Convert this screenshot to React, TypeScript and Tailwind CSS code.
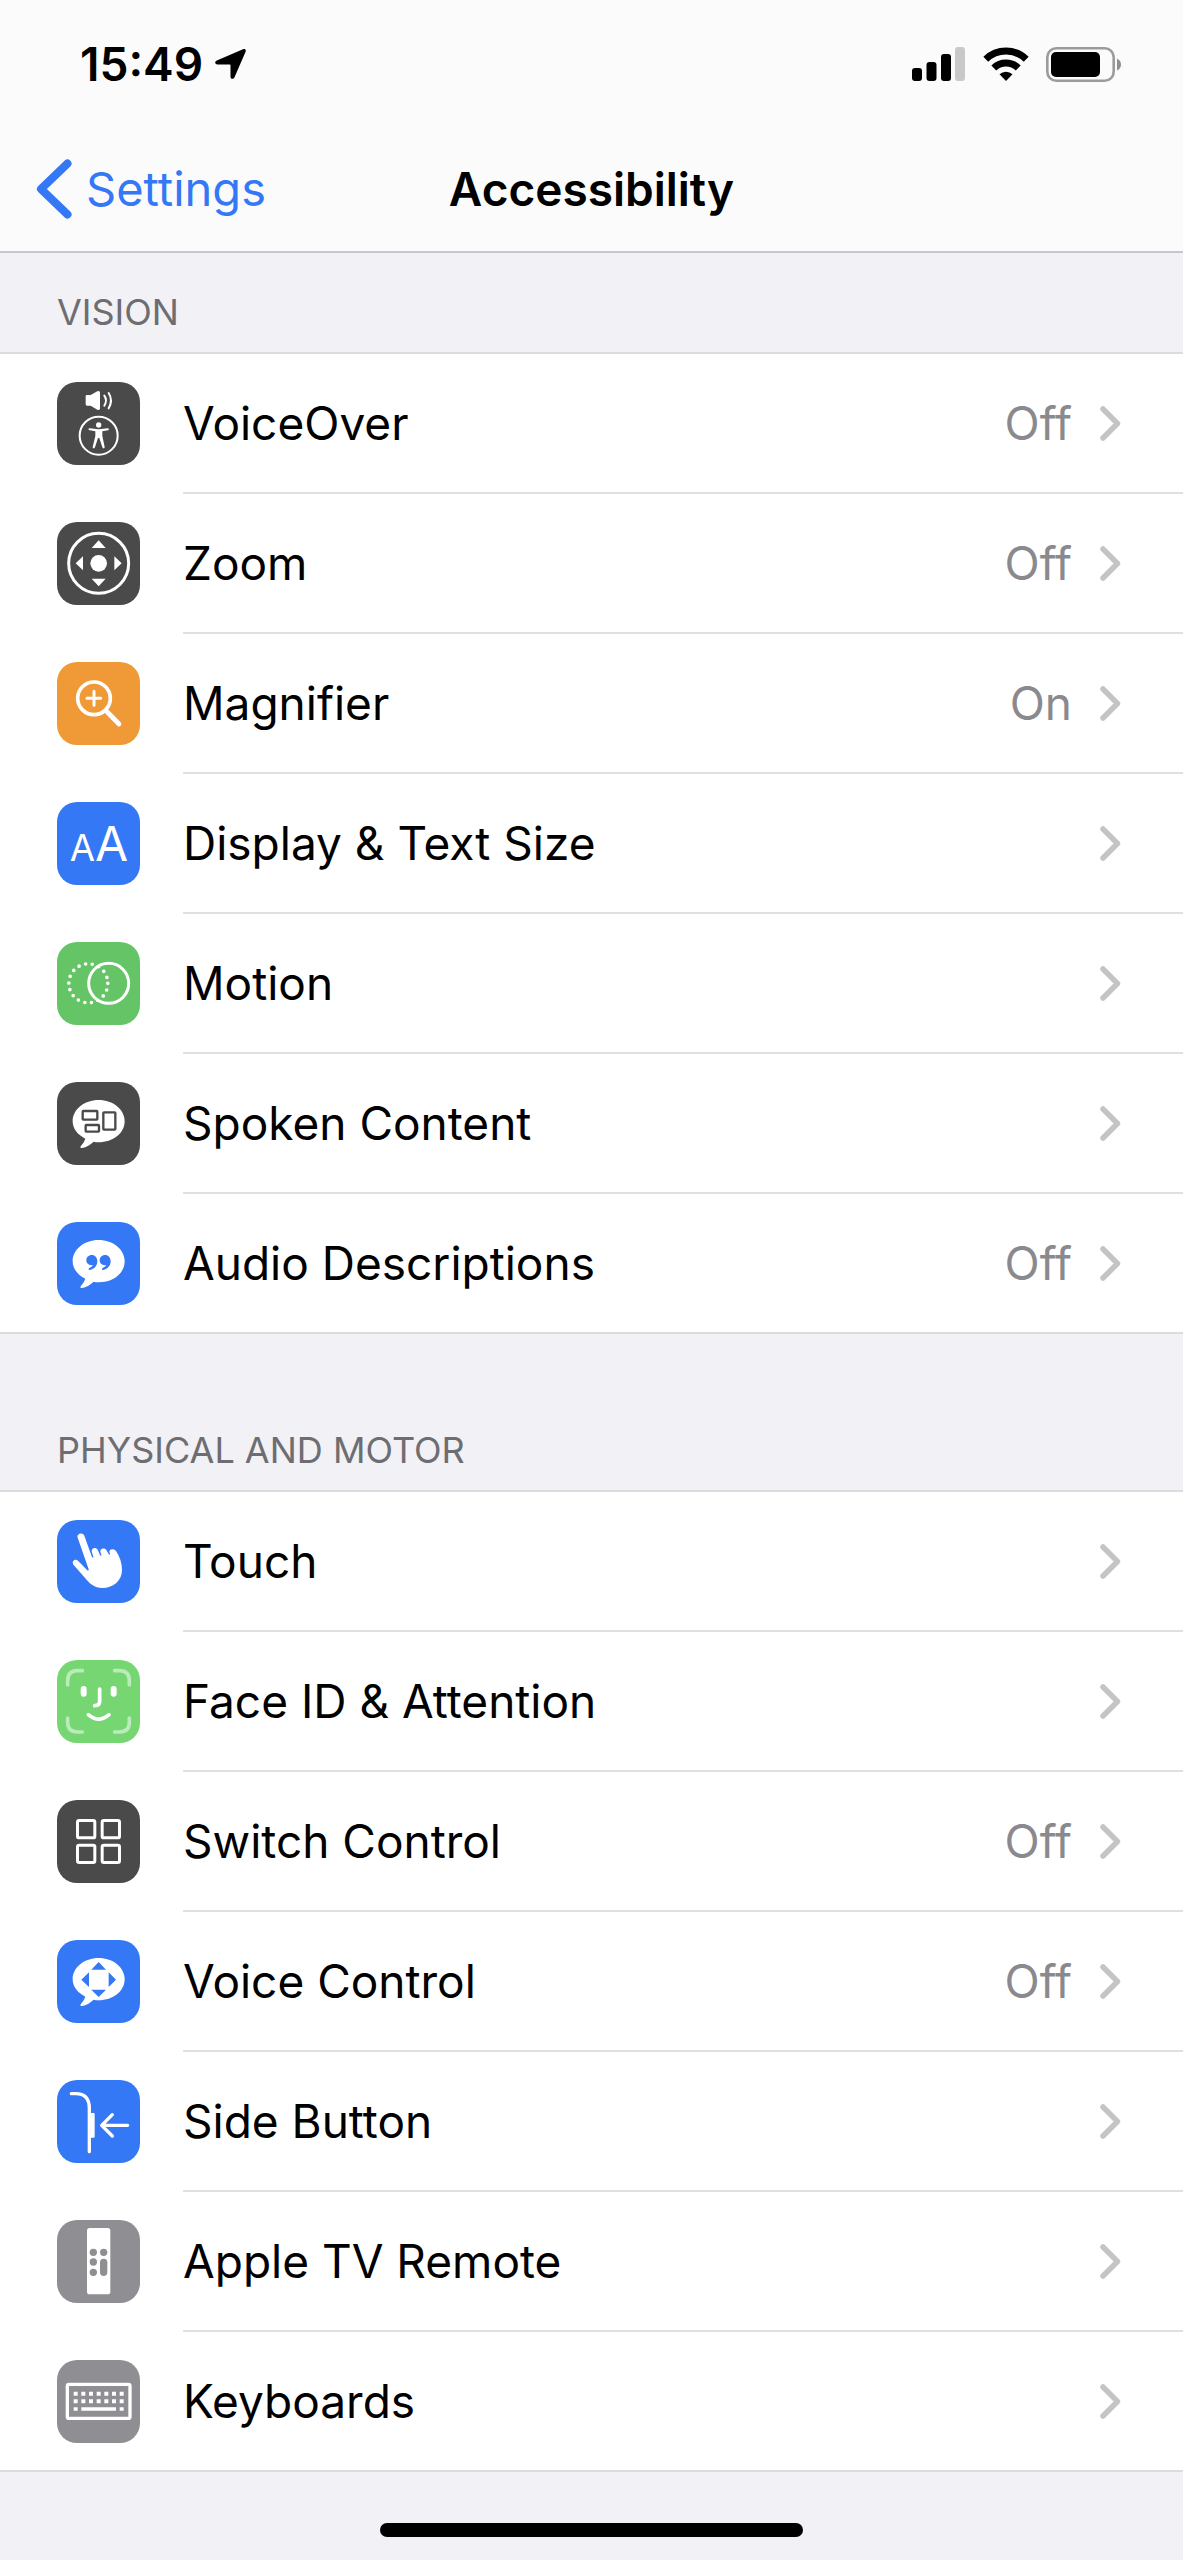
import React from 'react';

interface SettingRow {
    label: string;
    icon: React.ReactNode;
    tile: string;
    value?: string;
}

interface SettingSection {
    title: string;
    spacing: string;
    rows: SettingRow[];
}

const BUBBLE = 'M125 54c43 0 78 28 78 64s-35 63-78 63c-6 0-11-1-15-2-9 8-22 17-35 19-5 1-6-3-3-7 5-6 10-12 13-21-23-11-38-30-38-52 0-36 35-64 78-64z';

const VoiceOverIcon = () => (
    <>
        <path d="M86 43q0-4 4-4h11l20-11q8-3 8 4v47q0 7-8 4l-20-12h-11q-4 0-4-4z" fill="#fff" />
        <path d="M142 41q10 14 0 30M155 33q14 22 0 46" stroke="#fff" strokeWidth="6" strokeLinecap="round" />
        <circle cx="125" cy="161" r="57" stroke="#fff" strokeWidth="6" />
        <circle cx="125" cy="129" r="8" fill="#fff" />
        <path d="M98 139q27 5 54 0c5 0 5 5 1 6l-17 3v14l7 33c0 5-5 6-7 1l-9-28h-4l-9 28c-2 5-7 4-7-1l8-33v-14l-17-3c-5-1-5-6 0-6z" fill="#fff" />
    </>
);

const ZoomIcon = () => (
    <>
        <circle cx="125" cy="124" r="90" stroke="#fff" strokeWidth="9" />
        <circle cx="125" cy="124" r="25" fill="#fff" />
        <path d="M125 55l21 23h-42zM125 193l21-23h-42zM56 124l22-21v42zM194 124l-22-21v42z" fill="#fff" />
    </>
);

const MagnifierIcon = () => (
    <g stroke="#fff" strokeLinecap="round">
        <circle cx="111" cy="109" r="49" strokeWidth="11" />
        <path d="M148 147l38 39" strokeWidth="14" />
        <path d="M90 109h41M111 88v42" strokeWidth="9" />
    </g>
);

const TextSizeIcon = () => (
    <g fill="#fff" textAnchor="middle" className="font-['Inter',sans-serif] font-normal">
        <text x="76" y="176" fontSize="110">A</text>
        <text x="164" y="176" fontSize="144">A</text>
    </g>
);

const MotionIcon = () => (
    <g stroke="#fff">
        <circle cx="94" cy="124" r="58.5" strokeWidth="11" strokeLinecap="round" strokeDasharray="0 20.42" />
        <circle cx="155" cy="124" r="60" strokeWidth="9" />
    </g>
);

const SpokenContentIcon = () => (
    <>
        <path d={BUBBLE} fill="#fff" />
        <g stroke="#4a4a4a" strokeWidth="7">
            <rect x="77" y="87" width="44" height="26" rx="2" />
            <rect x="86" y="129" width="40" height="20" rx="2" />
            <rect x="139" y="91" width="36" height="52" rx="2" />
        </g>
    </>
);

const AudioDescriptionsIcon = () => (
    <>
        <path d={BUBBLE} fill="#fff" />
        <path d="M104 99c10 0 17 8 17 18 0 14-9 24-22 27-4 1-6-4-2-6 6-3 10-6 11-9-11 3-20-4-20-14 0-9 7-16 16-16zM144 99c10 0 17 8 17 18 0 14-9 24-22 27-4 1-6-4-2-6 6-3 10-6 11-9-11 3-20-4-20-14 0-9 7-16 16-16z" fill="#3478f6" />
    </>
);

const TouchIcon = () => (
    <path
        d="M62 53c-4-12 15-18 20-6l22 62c2 5 5 5 5 1l-5-16c-1-11 13-14 18-5l7 16c2 4 5 3 4-1l-3-9c-1-10 12-13 18-5l7 12c2 3 5 2 4-1l-2-6c1-9 14-10 20-2 12 17 18 38 18 57 0 33-28 54-59 54-24 0-38-13-51-29l-35-40c-8-11 4-20 13-13l27 28c3 3 6 1 5-2z"
        fill="#fff"
    />
);

const FaceIdIcon = () => (
    <g stroke="#fff" strokeLinecap="round" strokeWidth="11">
        <path d="M32 75V62q0-30 30-30h14M173 32h14q30 0 30 30v13M217 174v13q0 29-30 29h-14M76 216H62q-30 0-30-29v-13" opacity="0.5" />
        <path d="M80 87v14M170 87v14" strokeWidth="18" />
        <path d="M128 87v37q0 13-15 13" />
        <path d="M94 164q31 27 62 0" />
    </g>
);

const SwitchControlIcon = () => (
    <g stroke="#fff" strokeWidth="9">
        <rect x="61.5" y="61.5" width="52" height="52" rx="5" />
        <rect x="135.5" y="61.5" width="52" height="52" rx="5" />
        <rect x="61.5" y="135.5" width="52" height="52" rx="5" />
        <rect x="135.5" y="135.5" width="52" height="52" rx="5" />
    </g>
);

const VoiceControlIcon = () => (
    <>
        <path d={BUBBLE} fill="#fff" />
        <path d="M125 66l22 23h-44zM125 171l22-22h-44zM73 119l23-22v44zM177 119l-22-22v44z" fill="#3478f6" />
    </>
);

const SideButtonIcon = () => (
    <g stroke="#fff" strokeLinecap="round" strokeLinejoin="round">
        <path d="M43 41h13c27 0 41 16 41 44v130" strokeWidth="10" />
        <path d="M99 99h11q3 0 3 3v68q0 3-3 3h-11z" fill="#fff" stroke="none" />
        <path d="M135 136h77M166 104l-32 32 32 32" strokeWidth="10" />
    </g>
);

const RemoteIcon = () => (
    <>
        <rect x="90" y="24" width="70" height="199" rx="8" fill="#fff" />
        <g fill="#8e8e93">
            <circle cx="109" cy="97" r="11" />
            <circle cx="140" cy="97" r="11" />
            <circle cx="109" cy="126" r="11" />
            <circle cx="109" cy="157" r="11" />
            <rect x="129" y="116" width="22" height="52" rx="11" />
        </g>
    </>
);

const KeyboardIcon = () => (
    <>
        <rect x="31" y="73" width="188" height="102" rx="5" stroke="#fff" strokeWidth="10" />
        <path d="M50 101h150M50 124h150" stroke="#fff" strokeWidth="12" strokeDasharray="12 11" />
        <path d="M50 147h12M73 147h104M188 147h12" stroke="#fff" strokeWidth="11" />
    </>
);

const SECTIONS: SettingSection[] = [
    {
        title: 'Vision',
        spacing: 'pt-9',
        rows: [
            { label: 'VoiceOver', icon: <VoiceOverIcon />, tile: 'bg-[#4a4a4a]', value: 'Off' },
            { label: 'Zoom', icon: <ZoomIcon />, tile: 'bg-[#4a4a4a]', value: 'Off' },
            { label: 'Magnifier', icon: <MagnifierIcon />, tile: 'bg-[#f09a37]', value: 'On' },
            { label: 'Display & Text Size', icon: <TextSizeIcon />, tile: 'bg-[#3478f6]' },
            { label: 'Motion', icon: <MotionIcon />, tile: 'bg-[#65c466]' },
            { label: 'Spoken Content', icon: <SpokenContentIcon />, tile: 'bg-[#4a4a4a]' },
            { label: 'Audio Descriptions', icon: <AudioDescriptionsIcon />, tile: 'bg-[#3478f6]', value: 'Off' },
        ],
    },
    {
        title: 'Physical and Motor',
        spacing: 'pt-[93px]',
        rows: [
            { label: 'Touch', icon: <TouchIcon />, tile: 'bg-[#3478f6]' },
            { label: 'Face ID & Attention', icon: <FaceIdIcon />, tile: 'bg-[#76d672]' },
            { label: 'Switch Control', icon: <SwitchControlIcon />, tile: 'bg-[#4a4a4a]', value: 'Off' },
            { label: 'Voice Control', icon: <VoiceControlIcon />, tile: 'bg-[#3478f6]', value: 'Off' },
            { label: 'Side Button', icon: <SideButtonIcon />, tile: 'bg-[#3478f6]' },
            { label: 'Apple TV Remote', icon: <RemoteIcon />, tile: 'bg-[#8e8e93]' },
            { label: 'Keyboards', icon: <KeyboardIcon />, tile: 'bg-[#8e8e93]' },
        ],
    },
];

const StatusBar = () => (
    <div className="flex h-32 items-center justify-between pl-20 pr-[62px]">
        <div className="flex items-center gap-3">
            <time className="text-[46px] leading-[56px] font-semibold">15:49</time>
            <svg viewBox="0 0 31 30" className="h-[30px] w-[31px]" fill="#000" aria-hidden="true">
                <path d="M28 0.3c2-.8 3.2.5 2.6 2.4L19.5 28.3c-.9 2.2-4 2-4-.6V16.5c0-.7-.3-1-1-1H2.6C-.3 15.5-.6 12.5 1.8 11.4z" />
            </svg>
        </div>
        <div className="flex items-center">
            <svg viewBox="0 0 53 34" className="h-[34px] w-[53px]" aria-hidden="true">
                <rect x="0" y="21" width="10" height="13" rx="3" />
                <rect x="14.5" y="15" width="10" height="19" rx="3" />
                <rect x="29" y="7" width="10" height="27" rx="3" />
                <rect x="43" y="0" width="10" height="34" rx="3" fill="#c9c9ca" />
            </svg>
            <svg viewBox="0 0 46 34" className="ml-[18px] h-[34px] w-[46px]" fill="none" stroke="#000" strokeWidth="7" aria-hidden="true">
                <path d="M2.8 12.2a29 29 0 0 1 40.4 0" />
                <path d="M10.8 21a17.5 17.5 0 0 1 24.4 0" />
                <path d="M16.5 27.2a9.500 9.500 0 0 1 13 0L23 34z" fill="#000" stroke="none" />
            </svg>
            <svg viewBox="0 0 75 35" className="ml-[17px] h-[35px] w-[75px]" aria-hidden="true">
                <rect x="1.3" y="1.3" width="66.4" height="32.4" rx="9" fill="none" stroke="#9b9b9d" strokeWidth="2.6" />
                <rect x="5" y="5" width="49" height="25" rx="5" />
                <path d="M71 11.5q4 2 4 6t-4 6z" fill="#8f8f91" />
            </svg>
        </div>
    </div>
);

const SettingItem: React.FC<{ row: SettingRow }> = ({ row }) => (
    <li className="group">
        <a href="#" className="flex pl-[57px]">
            <span className={`mt-7 size-[83px] shrink-0 rounded-[20px] ${row.tile}`}>
                <svg viewBox="0 0 249 249" className="size-full" fill="none" aria-hidden="true">
                    {row.icon}
                </svg>
            </span>
            <span className="ml-[43px] flex flex-1 items-center border-b-2 border-[#e0e0e2] pr-[62px] group-last:border-b-0">
                <span className="flex-1 py-10 text-[46px] leading-[58px]">{row.label}</span>
                {row.value && <span className="text-[46px] leading-[58px] text-[#8a8a8e]">{row.value}</span>}
                <svg viewBox="0 0 21 35" className="ml-7 h-[35px] w-[21px]" fill="none" aria-hidden="true">
                    <path d="M3 3l14.500 14.500L3 32" stroke="#c4c4c6" strokeWidth="5.5" strokeLinecap="round" strokeLinejoin="round" />
                </svg>
            </span>
        </a>
    </li>
);

export default function App() {
    return (
        <div className="flex min-h-screen flex-col bg-[#f1f1f6] font-['Inter','Liberation_Sans',sans-serif] text-black">
            <header className="border-b-2 border-[#c8c8cc] bg-[#fbfbfc]">
                <StatusBar />
                <nav className="grid grid-cols-[1fr_auto_1fr] items-center px-9 pt-[31px] pb-8">
                    <a href="#" className="flex items-center gap-[14px] text-[47px] leading-[60px] text-[#3478f6]">
                        <svg viewBox="0 0 36 60" className="h-[60px] w-9" fill="none" aria-hidden="true">
                            <path d="M31.500 4.500L5 30l26.500 25.500" stroke="#3478f6" strokeWidth="8" strokeLinecap="round" strokeLinejoin="round" />
                        </svg>
                        Settings
                    </a>
                    <h1 className="text-[46px] leading-[60px] font-semibold">Accessibility</h1>
                </nav>
            </header>

            <main className="flex-1">
                {SECTIONS.map((section) => (
                    <section key={section.title}>
                        <h2 className={`px-[57px] pb-[17px] text-[36px] leading-[46px] text-[#6d6d72] uppercase ${section.spacing}`}>
                            {section.title}
                        </h2>
                        <ul className="border-y-2 border-[#dcdcdf] bg-white">
                            {section.rows.map((row) => (
                                <SettingItem key={row.label} row={row} />
                            ))}
                        </ul>
                    </section>
                ))}
            </main>

            <div className="mx-auto mb-[23px] h-[14px] w-[423px] rounded-full bg-black" />
        </div>
    );
}
